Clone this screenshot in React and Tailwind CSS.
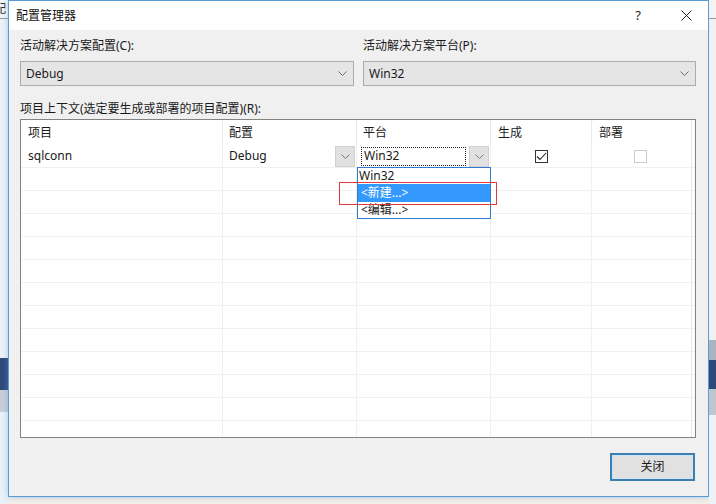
import React from 'react'

const FONT = "font-['Noto_Sans','Noto_Sans_CJK_SC',sans-serif]"

function Chevron({ color = '#6d6d6d' }) {
  return (
    <svg width="9" height="5" viewBox="0 0 9 5" fill="none">
      <path d="M0.5 0.5 L4.5 4.5 L8.5 0.5" stroke={color} strokeWidth="1" />
    </svg>
  )
}

function Combo({ value, className }) {
  return (
    <div className={`h-[25px] bg-[#e5e5e5] border border-[#acacac] flex items-center justify-between pl-[5px] pr-[6px] ${className}`}>
      <span className="text-[12px] text-[#1a1a1a]">{value}</span>
      <Chevron />
    </div>
  )
}

function DropButton() {
  return (
    <div className="w-[20px] h-[21px] bg-[#e1e1e1] border border-[#d0d0d0] flex items-center justify-center">
      <Chevron color="#7a7a7a" />
    </div>
  )
}

const COLS = 'grid-cols-[202px_134px_134px_101px_100px_1fr]'

function EmptyRow() {
  return (
    <div className={`grid ${COLS} h-[23px] border-b border-[#f0f0f0] shrink-0`}>
      <div className="border-r border-[#f0f0f0]" />
      <div className="border-r border-[#f0f0f0]" />
      <div className="border-r border-[#f0f0f0]" />
      <div className="border-r border-[#f0f0f0]" />
      <div className="border-r border-[#e8e8e8]" />
      <div />
    </div>
  )
}

export default function App() {
  return (
    <div className={`w-[716px] h-[504px] flex bg-[#f4efe9] overflow-hidden ${FONT}`}>
      {/* left backdrop strip */}
      <div className="w-[8px] flex flex-col shrink-0 bg-[#f5f5f5]">
        <div className="h-[18px] overflow-hidden text-[12px] leading-[18px] text-[#333] -ml-[6px]">配</div>
        <div className="h-px bg-[#9a9a9a]" />
        <div className="h-[339px] bg-[#eef3f8]" />
        <div className="h-[32px] bg-[#2f4a7a]" />
        <div className="h-[22px] bg-[#c9cfd8]" />
        <div className="flex-1 bg-[#eaf1f9]" />
      </div>

      {/* dialog */}
      <div className="w-[701px] h-[497px] border border-[#5a9bd8] flex flex-col shrink-0 shadow-[0_0_6px_rgba(90,155,216,0.5)]">
        {/* title bar */}
        <div className="h-[29px] bg-white flex items-center pl-[7px] pr-[16px] shrink-0">
          <span className="text-[12px] text-[#111] flex-1">配置管理器</span>
          <span className="text-[13px] text-[#222] mr-[40px]">?</span>
          <svg width="11" height="11" viewBox="0 0 11 11">
            <path d="M0.5 0.5 L10.5 10.5 M10.5 0.5 L0.5 10.5" stroke="#222" strokeWidth="1" />
          </svg>
        </div>

        {/* body */}
        <div className="flex-1 bg-[#f0f0f0] flex flex-col pl-[11px] pr-[12px] pt-[8px]">
          <div className="flex gap-[9px]">
            <div className="w-[334px] flex flex-col gap-[7px]">
              <span className="text-[12px] leading-[16px] text-[#1a1a1a]">活动解决方案配置(C):</span>
              <Combo value="Debug" />
            </div>
            <div className="flex-1 flex flex-col gap-[7px]">
              <span className="text-[12px] leading-[16px] text-[#1a1a1a]">活动解决方案平台(P):</span>
              <Combo value="Win32" />
            </div>
          </div>

          <span className="text-[12px] leading-[16px] text-[#1a1a1a] mt-[15px]">项目上下文(选定要生成或部署的项目配置)(R):</span>

          {/* table */}
          <div className="relative mt-[2px] h-[319px] w-[676px] border border-[#828282] bg-white flex flex-col overflow-hidden">
            <div className={`grid ${COLS} h-[25px] shrink-0 text-[12px] text-[#1a1a1a]`}>
              <div className="border-r border-[#e8e8e8] pl-[7px] flex items-center">项目</div>
              <div className="border-r border-[#e8e8e8] pl-[6px] flex items-center">配置</div>
              <div className="border-r border-[#e8e8e8] pl-[6px] flex items-center">平台</div>
              <div className="border-r border-[#e8e8e8] pl-[7px] flex items-center">生成</div>
              <div className="border-r border-[#e8e8e8] pl-[7px] flex items-center">部署</div>
              <div />
            </div>

            <div className={`grid ${COLS} h-[23px] border-b border-[#f0f0f0] shrink-0 text-[12px] text-[#1a1a1a]`}>
              <div className="border-r border-[#f0f0f0] pl-[7px] flex items-center">sqlconn</div>
              <div className="border-r border-[#f0f0f0] pl-[6px] pr-[1px] flex items-center justify-between">
                <span>Debug</span>
                <DropButton />
              </div>
              <div className="border-r border-[#f0f0f0] pl-[4px] pr-[1px] flex items-center justify-between">
                <div className="w-[105px] h-[19px] border border-dotted border-[#222] flex items-center pl-[2px]">Win32</div>
                <DropButton />
              </div>
              <div className="border-r border-[#f0f0f0] flex items-center justify-center">
                <div className="w-[13px] h-[13px] border border-[#333] bg-white flex items-center justify-center">
                  <svg width="11" height="9" viewBox="0 0 11 9">
                    <path d="M1 4.5 L4 7.5 L10 1" stroke="#222" strokeWidth="1.1" fill="none" />
                  </svg>
                </div>
              </div>
              <div className="border-r border-[#e8e8e8] flex items-center justify-center pr-[2px]">
                <div className="w-[13px] h-[13px] border border-[#cccccc] bg-white" />
              </div>
              <div />
            </div>

            {Array.from({ length: 12 }).map((_, i) => (
              <EmptyRow key={i} />
            ))}

            {/* open dropdown list */}
            <div className="absolute left-[336px] top-[47px] w-[134px] h-[52px] border border-[#2e7bd0] bg-white flex flex-col text-[12px] text-[#1a1a1a]">
              <div className="h-[16px] leading-[16px] pl-[1px]">Win32</div>
              <div className="h-[18px] leading-[18px] pl-[3px] bg-[#3399ff] text-white">&lt;新建...&gt;</div>
              <div className="h-[16px] leading-[16px] pl-[3px]">&lt;编辑...&gt;</div>
            </div>

            {/* red highlight box */}
            <div className="absolute left-[318px] top-[62px] w-[158px] h-[23px] border border-[#e0393e]" />
          </div>

          <div className="flex justify-end mt-[15px] pr-[1px]">
            <button className="w-[85px] h-[28px] border-2 border-[#3c7fb1] bg-[#e1e1e1] text-[12px] text-[#1a1a1a] flex items-center justify-center shadow-[inset_0_0_0_1px_#cfe6f8]">
              关闭
            </button>
          </div>
        </div>
      </div>

      {/* right backdrop strip */}
      <div className="flex-1 flex flex-col bg-[#f3f3f3]">
        <div className="h-[18px]" />
        <div className="h-px bg-[#9a9a9a]" />
        <div className="h-[321px] bg-[#f0f0f0]" />
        <div className="h-[20px] bg-[#aab4c2]" />
        <div className="h-[29px] bg-[#2f4a7a]" />
        <div className="h-[26px] bg-[#c0c6cf]" />
        <div className="flex-1 bg-[#eef2f6]" />
      </div>
    </div>
  )
}
